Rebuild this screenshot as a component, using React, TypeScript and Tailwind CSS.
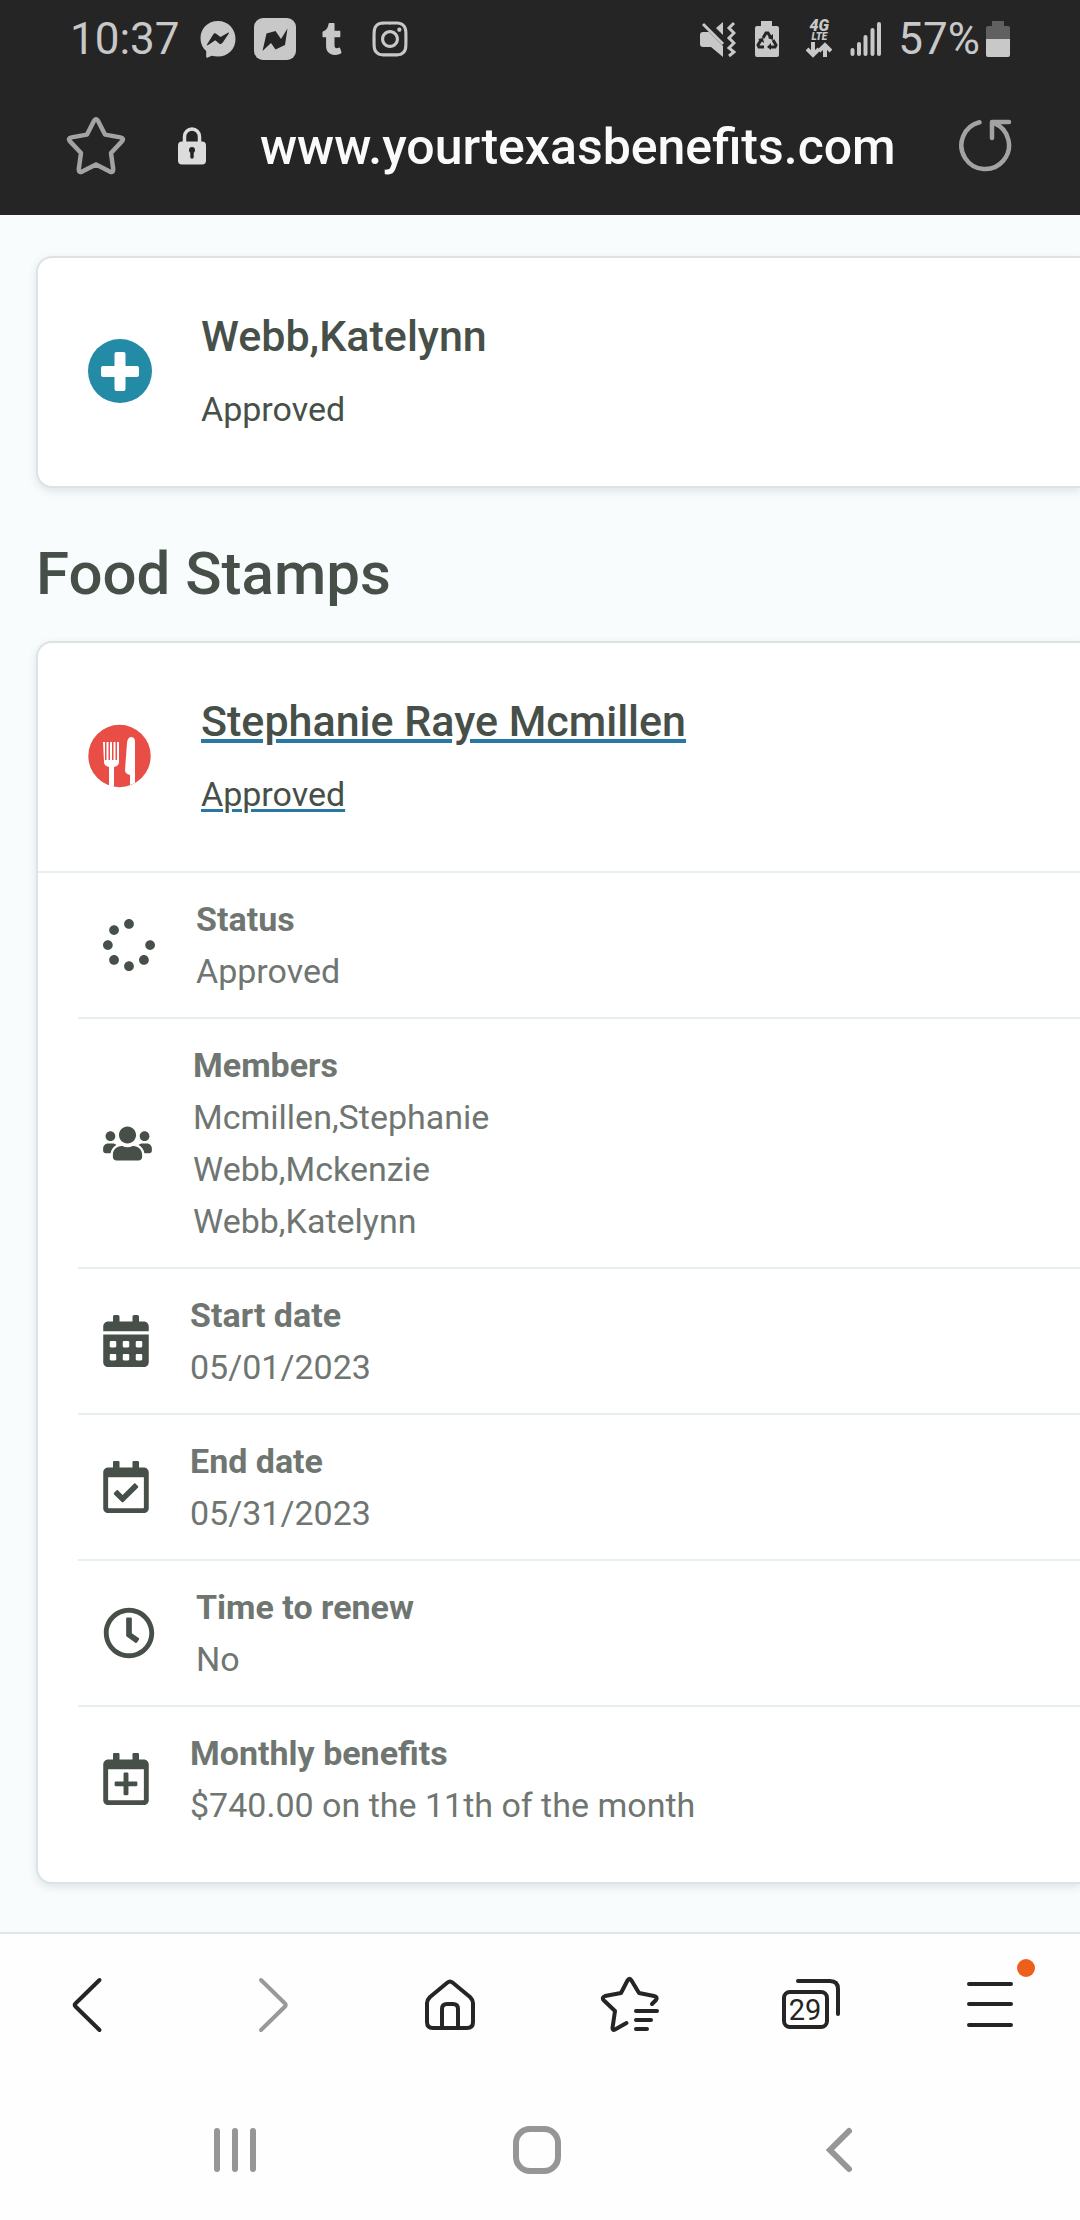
import type { ReactNode } from "react";
import {
  FaCalendarAlt,
  FaInstagram,
  FaRegCalendarCheck,
  FaRegCalendarPlus,
  FaRegClock,
  FaSpinner,
  FaTumblr,
  FaUsers,
} from "react-icons/fa";

function MessengerIcon() {
  return (
    <svg width="36" height="37" viewBox="0 0 36 37" aria-hidden="true">
      <path
        fill="#c8c8c8"
        d="M18 0C7.700 0 .5 7.500.5 17.200c0 5.300 2.100 9.700 5.700 12.800v6c0 .5.500.9 1 .7l4.500-2c2 .5 4 .8 6.300.8 10.300 0 17.500-7.500 17.500-17.500S28.300 0 18 0z"
      />
      <path fill="#252525" d="M7 23.500 13.200 13.500c.8-1.300 2.300-1.500 3.300-.6l4 3.200L28 11.700c.6-.4 1.200.2.800.8L22.600 21.800c-.8 1.300-2.500 1.500-3.500.6l-3.800-3.200L7.800 24.300c-.6.4-1.200-.2-.8-.8z" />
    </svg>
  );
}

function NewsIcon() {
  return (
    <svg width="42" height="42" viewBox="0 0 42 42" aria-hidden="true">
      <rect width="42" height="42" rx="9" fill="#c8c8c8" />
      <path fill="#252525" d="m8.500 33 4-17.500 9-2.500 5.500 8 6.500-10.500L31 27l-9.500 4.500L17 25z" />
    </svg>
  );
}

function MuteVibrateIcon() {
  return (
    <svg width="36" height="37" viewBox="0 0 36 37" aria-hidden="true">
      <path fill="#c8c8c8" d="M0 14q0-3 3-3h6L23 25v11L11 26H3q-3 0-3-3zM23 1v13l-7-7z" />
      <path stroke="#c8c8c8" strokeWidth="3" d="M3 3 23 23" />
      <path
        fill="none"
        stroke="#c8c8c8"
        strokeWidth="3"
        d="m34 2-5 5 5 5-5 5 5 5-5 5 5 4-5 4"
      />
    </svg>
  );
}

function PowerSaveIcon() {
  return (
    <svg width="26" height="37" viewBox="0 0 26 37" aria-hidden="true">
      <path fill="#c8c8c8" d="M7 0h11v5h5q2 0 2 2v27q0 2-2 2H3q-2 0-2-2V7q0-2 2-2h4z" />
      <path
        fill="none"
        stroke="#252525"
        strokeWidth="3"
        d="m9 17 3-5h2l3 5M19 19l3 5-1 2h-5M10 26H5l-1-2 3-5"
      />
      <path fill="#252525" d="m19 13v6l-5-2zM17 22v7l-4-3zM4 18l5-1 1 5z" />
    </svg>
  );
}

function NetworkIcon() {
  return (
    <div className="flex w-[26px] flex-col items-center font-black italic text-[#c8c8c8]">
      <span className="text-[16px] leading-[12px]">4G</span>
      <span className="text-[10px] leading-[10px]">LTE</span>
      <svg width="26" height="16" viewBox="0 0 26 16" aria-hidden="true">
        <path
          fill="none"
          stroke="#c8c8c8"
          strokeWidth="4"
          d="M7 0v13M1 7l6 6 6-6M19 15V3M13 9l6-6 6 6"
        />
      </svg>
    </div>
  );
}

function SignalIcon() {
  return (
    <svg width="32" height="34" viewBox="0 0 32 34" aria-hidden="true">
      <path
        stroke="#c8c8c8"
        strokeWidth="4"
        strokeLinecap="round"
        d="M2.500 28v4M9 22v10M15.500 15v17M22.500 8v24M29 2v30"
      />
    </svg>
  );
}

function BatteryIcon() {
  return (
    <svg width="24" height="36" viewBox="0 0 24 36" aria-hidden="true">
      <path fill="#606060" d="M6 0h12v5h4q2 0 2 2v11H0V7q0-2 2-2h4z" />
      <path fill="#c8c8c8" d="M0 18h24v16q0 2-2 2H2q-2 0-2-2z" />
    </svg>
  );
}

function StarIcon() {
  return (
    <svg width="60" height="60" viewBox="0 0 60 60" aria-hidden="true">
      <path
        fill="none"
        stroke="#a3a3a3"
        strokeWidth="4.500"
        strokeLinejoin="round"
        d="M27.800 4.200q2.200-4 4.400 0L39 17.600l15.500 2.800q4 .8 1.400 4L45 36l2.200 16q.2 4-3.400 2.600L30 47.600 16.200 54.600q-3.600 1.400-3.400-2.600L15 36 4 24.400q-2.600-3.200 1.500-4L21 17.600z"
      />
    </svg>
  );
}

function LockIcon() {
  return (
    <svg width="28" height="40" viewBox="0 0 28 40" aria-hidden="true">
      <path fill="none" stroke="#dcdcdc" strokeWidth="3.500" d="M6.500 16V9.500a7.500 7.500 0 0 1 15 0V16" />
      <rect y="14.500" width="28" height="23" rx="4" fill="#dcdcdc" />
      <circle cx="14" cy="23" r="3" fill="#252525" />
      <path stroke="#252525" strokeWidth="3.500" strokeLinecap="round" d="M14 24v6" />
    </svg>
  );
}

function ReloadIcon() {
  return (
    <svg width="54" height="58" viewBox="0 0 54 58" aria-hidden="true">
      <g fill="none" stroke="#a3a3a3" strokeWidth="4.500" strokeLinecap="round" strokeLinejoin="round">
        <path d="M21.500 4.200A23.800 23.800 0 1 0 36 5.200" />
        <path d="M51 4H34v16" />
      </g>
    </svg>
  );
}

function MedicalIcon() {
  return (
    <svg className="size-16 shrink-0" viewBox="0 0 64 64" aria-hidden="true">
      <circle cx="32" cy="32" r="32" fill="#238ba6" />
      <rect x="26.500" y="13" width="11" height="39" rx="2" fill="#fff" />
      <rect x="13" y="27" width="38" height="11" rx="2" fill="#fff" />
    </svg>
  );
}

function FoodIcon() {
  return (
    <svg className="size-16 shrink-0" viewBox="0 0 64 64" aria-hidden="true">
      <circle cx="31.500" cy="32" r="31.200" fill="#e94e46" />
      <path
        fill="#fff"
        d="M15 18h2v18h1.500V18h2v18H22V18h2v18h1.500V18h2v18h1.500V18h2v20q0 4-5 5v19.500q-3 .4-5-.5V43q-5-1-5-5z"
      />
      <path fill="#fff" d="M39 19q.5-5.500 4-6 4 0 4 4.500V59l-5 2V51q-5-1-5-5z" />
    </svg>
  );
}

const line = {
  fill: "none",
  stroke: "#252525",
  strokeWidth: 4,
  strokeLinecap: "round",
  strokeLinejoin: "round",
} as const;

function HeadCard({ icon, children }: { icon: ReactNode; children: ReactNode }) {
  return (
    <div className="flex items-center gap-[49px] pt-[49px] pb-[51px] pl-[50px] text-[#464f48]">
      {icon}
      {children}
    </div>
  );
}

const details = [
  { label: "Status", lines: ["Approved"], icon: <FaSpinner className="size-[52px] shrink-0" /> },
  {
    label: "Members",
    lines: ["Mcmillen,Stephanie", "Webb,Mckenzie", "Webb,Katelynn"],
    icon: <FaUsers className="h-[39px] w-[49px] shrink-0" />,
  },
  {
    label: "Start date",
    lines: ["05/01/2023"],
    icon: <FaCalendarAlt className="h-[52px] w-[46px] shrink-0" />,
  },
  {
    label: "End date",
    lines: ["05/31/2023"],
    icon: <FaRegCalendarCheck className="h-[52px] w-[46px] shrink-0" />,
  },
  { label: "Time to renew", lines: ["No"], icon: <FaRegClock className="size-[52px] shrink-0" /> },
  {
    label: "Monthly benefits",
    lines: ["$740.00 on the 11th of the month"],
    icon: <FaRegCalendarPlus className="h-[52px] w-[46px] shrink-0" />,
  },
];

function ToolButton({ label, children }: { label: string; children: ReactNode }) {
  return (
    <button type="button" aria-label={label} className="flex items-center justify-center">
      <span className="relative">{children}</span>
    </button>
  );
}

export default function App() {
  return (
    <div className="flex min-h-screen flex-col overflow-x-hidden bg-[#f8fcfd] font-[Roboto,sans-serif]">
      <header className="bg-[#252525]">
        <div className="flex h-[78px] items-center justify-between pr-[70px] pl-[70px] text-[44px] text-[#c8c8c8]">
          <div className="flex items-center">
            <span>10:37</span>
            <div className="ml-5 flex items-center gap-[18px]">
              <MessengerIcon />
              <NewsIcon />
            </div>
            <FaTumblr className="ml-5 size-8" />
            <FaInstagram className="ml-[22px] size-10" />
          </div>
          <div className="flex items-center">
            <MuteVibrateIcon />
            <div className="ml-[18px] flex items-center gap-[26px]">
              <PowerSaveIcon />
              <NetworkIcon />
            </div>
            <div className="ml-[18px] flex items-center gap-4">
              <SignalIcon />
              <span>57%</span>
            </div>
            <div className="ml-[6px]">
              <BatteryIcon />
            </div>
          </div>
        </div>
        <div className="flex h-[137px] items-center pr-[68px] pl-[66px]">
          <button type="button" aria-label="Bookmark this page">
            <StarIcon />
          </button>
          <span className="ml-[52px]">
            <LockIcon />
          </span>
          <input
            type="text"
            readOnly
            aria-label="Address"
            defaultValue="www.yourtexasbenefits.com"
            className="ml-[54px] min-w-0 flex-1 bg-transparent text-[50px] leading-[60px] font-medium text-[#fafafa] outline-none"
          />
          <button type="button" aria-label="Reload">
            <ReloadIcon />
          </button>
        </div>
      </header>

      <main className="flex-1 pt-[41px] pb-[46px] pl-9">
        <section className="rounded-l-2xl border-2 border-r-0 border-[#dde2e5] bg-white shadow-[0_3px_8px_rgba(60,80,90,0.14)]">
          <HeadCard icon={<MedicalIcon />}>
            <div>
              <h3 className="text-[43px] leading-[58px] font-medium">Webb,Katelynn</h3>
              <p className="mt-[18px] text-[34px] leading-[52px]">Approved</p>
            </div>
          </HeadCard>
        </section>

        <h2 className="mt-[50px] text-[60px] leading-[72px] font-medium text-[#464f48]">Food Stamps</h2>

        <section className="mt-[31px] rounded-l-2xl border-2 border-r-0 border-[#dde2e5] bg-white shadow-[0_3px_8px_rgba(60,80,90,0.14)]">
          <HeadCard icon={<FoodIcon />}>
            <a href="#details" className="block">
              <span className="block text-[43px] leading-[58px] font-medium underline decoration-[#2878a6] decoration-4 underline-offset-[3px]">
                Stephanie Raye Mcmillen
              </span>
              <span className="mt-[18px] block text-[34px] leading-[52px] underline decoration-[#2878a6] decoration-[3px] underline-offset-[3px]">
                Approved
              </span>
            </a>
          </HeadCard>
          <dl id="details" className="border-t-2 border-[#e7eeef] pb-[31px]">
            {details.map((d) => (
              <div
                key={d.label}
                className="ml-10 flex items-center gap-[41px] border-b-2 border-[#e7eeef] py-5 pl-[25px] text-[34px] leading-[52px] text-[#6f7671] last:border-b-0"
              >
                <span className="text-[#464f48]">{d.icon}</span>
                <div>
                  <dt className="font-bold">{d.label}</dt>
                  {d.lines.map((l) => (
                    <dd key={l}>{l}</dd>
                  ))}
                </div>
              </div>
            ))}
          </dl>
        </section>
      </main>

      <footer className="bg-[#fefefe]">
        <nav
          aria-label="Browser"
          className="grid h-[148px] grid-cols-6 border-t-2 border-[#e4e6e6] pb-1"
        >
          <ToolButton label="Back">
            <svg width="60" height="60" viewBox="0 0 60 60" aria-hidden="true">
              <path {...line} d="M39.500 5 15.500 28.500q-1.500 1.500 0 3L39.500 55" />
            </svg>
          </ToolButton>
          <ToolButton label="Forward">
            <svg width="60" height="60" viewBox="0 0 60 60" aria-hidden="true">
              <path {...line} stroke="#999" d="M21 5 45 28.500q1.500 1.500 0 3L21 55" />
            </svg>
          </ToolButton>
          <ToolButton label="Home">
            <svg width="60" height="60" viewBox="0 0 60 60" aria-hidden="true">
              <path
                {...line}
                d="M27.500 7.500q2.500-2 5 0L50 22q3 3 3 6v19q0 6-6 6H13q-6 0-6-6V28q0-3 3-6zM22 52V34q0-5 5-5h6q5 0 5 5v18"
              />
            </svg>
          </ToolButton>
          <ToolButton label="Bookmarks">
            <svg width="60" height="60" viewBox="0 0 60 60" aria-hidden="true">
              <path
                {...line}
                d="M26.500 48 15 54.500q-2.500 1.500-2.500-1.500L15 36 4 25.500q-3-3 1-4.500l16-3L27.500 5.500q2-3.500 4 0L39 18l15 3q4 1 2 4l-4 4M36 36h21M36 45h15M36 54h11"
              />
            </svg>
          </ToolButton>
          <ToolButton label="Tabs, 29 open">
            <svg width="60" height="60" viewBox="0 0 60 60" aria-hidden="true">
              <rect {...line} x="4" y="17" width="43" height="35" rx="6" />
              <path {...line} d="M18 6h32q8 0 8 8v25" />
            </svg>
            <span className="absolute top-[21px] left-[3px] w-11 text-center text-[29px] leading-[28px] text-[#252525]">
              29
            </span>
          </ToolButton>
          <ToolButton label="Menu">
            <svg width="60" height="60" viewBox="0 0 60 60" aria-hidden="true">
              <path {...line} d="M9 9h42M9 29h42M9 50h42" />
            </svg>
            <span className="absolute -top-4 -right-[15px] size-[18px] rounded-full bg-[#ed5f1a]" />
          </ToolButton>
        </nav>
        <nav aria-label="System" className="grid h-[140px] grid-cols-3 pr-[90px] pl-[84px]">
          <ToolButton label="Recent apps">
            <svg width="48" height="48" viewBox="0 0 48 48" aria-hidden="true">
              <path {...line} stroke="#969696" strokeWidth="6" d="M6 5v38M24 5v38M42 5v38" />
            </svg>
          </ToolButton>
          <ToolButton label="Home screen">
            <svg width="48" height="48" viewBox="0 0 48 48" aria-hidden="true">
              <rect {...line} stroke="#969696" strokeWidth="6" x="3" y="3" width="42" height="42" rx="14" />
            </svg>
          </ToolButton>
          <ToolButton label="Go back">
            <svg width="48" height="48" viewBox="0 0 48 48" aria-hidden="true">
              <path {...line} stroke="#969696" strokeWidth="6" strokeLinejoin="miter" d="M34 5 15 24l19 19" />
            </svg>
          </ToolButton>
        </nav>
      </footer>
    </div>
  );
}
